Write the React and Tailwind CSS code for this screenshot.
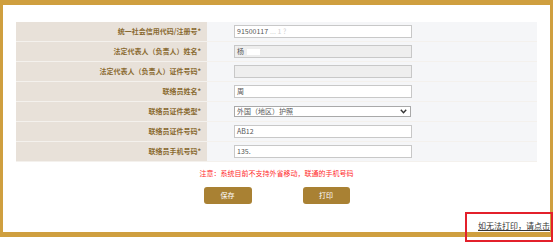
import React from 'react';

const rows = [
  { label: '统一社会信用代码/注册号*', value: '91500117', faint: '... 1 ?', type: 'input' },
  { label: '法定代表人（负责人）姓名*', value: '杨', type: 'disabled', mask: true },
  { label: '法定代表人（负责人）证件号码*', value: '', type: 'disabled' },
  { label: '联络员姓名*', value: '周', type: 'input' },
  { label: '联络员证件类型*', value: '外国（地区）护照', type: 'select' },
  { label: '联络员证件号码*', value: 'AB12', type: 'input' },
  { label: '联络员手机号码*', value: '135.', type: 'input' },
];

const Field = ({ row }) => {
  if (row.type === 'select') {
    return (
      <div className="flex h-[11px] w-[177px] items-center justify-between border border-[#a9a9a9] bg-white pl-[2px] pr-[3px] text-[7px] leading-none text-[#555]">
        <span>{row.value}</span>
        <svg width="7" height="5" viewBox="0 0 7 5" fill="none" stroke="#333" strokeWidth="1.4">
          <path d="M0.8 0.8 L3.5 3.8 L6.2 0.8" />
        </svg>
      </div>
    );
  }
  return (
    <div
      className={`flex h-[13px] w-[178px] items-center border border-[#c8c8c8] pl-[2px] text-[7px] leading-none text-[#555] ${
        row.type === 'disabled' ? 'bg-[#eeeeee]' : 'bg-white'
      }`}
    >
      <span>{row.value}</span>
      {row.faint && <span className="ml-[2px] text-[#d0d0d0]">{row.faint}</span>}
      {row.mask && <span className="ml-[3px] inline-block h-[6px] w-[13px] bg-white" />}
    </div>
  );
};

export default function App() {
  return (
    <div className="relative h-[246px] w-[555px] bg-white font-['Noto_Sans_CJK_SC','Liberation_Sans',sans-serif]">
      <div className="flex h-[237px] w-[553px] flex-col border-b-[5px] border-l-[3px] border-r-[3px] border-t-[5px] border-[#cf9f3f]">
        {/* form table */}
        <div className="ml-[13px] mt-[17px] w-[521px]">
          {rows.map((row) => (
            <div key={row.label} className="grid h-[20px] grid-cols-[191px_1fr] border-b border-[#f4f1ed]">
              <div className="flex items-center justify-end bg-[#e8e1d9] pr-[6px] text-[7px] font-bold leading-none text-[#8a6a30]">
                {row.label}
              </div>
              <div className="flex items-center bg-[#f5f6f8] pl-[27px]">
                <Field row={row} />
              </div>
            </div>
          ))}
        </div>

        <p className="ml-[13px] mt-[7px] w-[521px] text-center text-[7px] leading-[9px] text-[#ff2a2a]">
          注意：系统目前不支持外省移动，联通的手机号码
        </p>

        <div className="ml-[13px] mt-[9px] flex w-[521px] justify-center gap-[51px]">
          <button className="h-[17px] w-[48px] rounded-[3px] bg-[#a98133] text-[7px] leading-none text-white">
            保存
          </button>
          <button className="h-[17px] w-[47px] rounded-[3px] bg-[#a98133] text-[7px] leading-none text-white">
            打印
          </button>
        </div>
      </div>

      {/* print fallback link */}
      <a className="absolute left-[478px] top-[221px] text-[8px] leading-[10px] text-[#333] underline">
        如无法打印，请点击
      </a>

      {/* annotation box */}
      <div className="absolute left-[465px] top-[212px] h-[30px] w-[88px] border-2 border-[#e3202b]" />
    </div>
  );
}
